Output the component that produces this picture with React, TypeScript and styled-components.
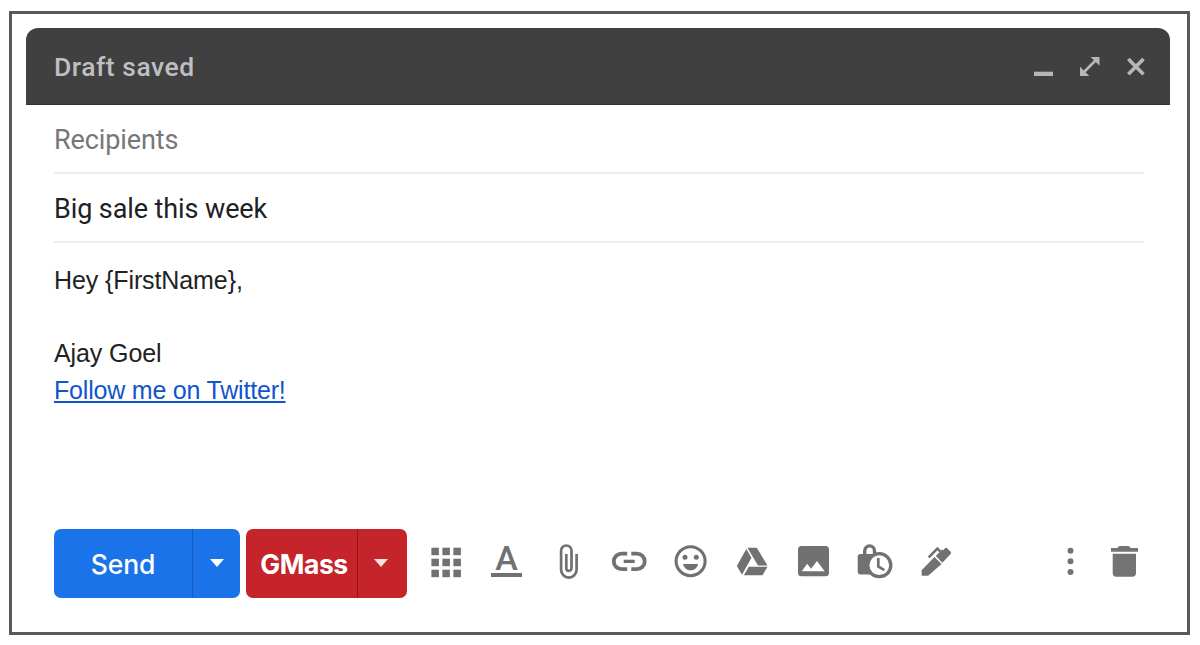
import type { ReactNode } from "react";
import styled, { createGlobalStyle } from "styled-components";

const Icon = (props: { label: string; children: ReactNode }) => (
  <S.Icon viewBox="0 0 40 40" role="img" aria-label={props.label}>
    {props.children}
  </S.Icon>
);

const SplitButton = (props: {
  label: string;
  color: string;
  divider: string;
  mainWidth: number;
  menuWidth: number;
  bold?: boolean;
}) => (
  <S.SplitButton $color={props.color}>
    <S.MainAction $width={props.mainWidth} $bold={props.bold}>
      {props.label}
    </S.MainAction>
    <S.MenuAction
      $width={props.menuWidth}
      $divider={props.divider}
      $bold={props.bold}
      aria-label={`${props.label} options`}
    >
      <S.Caret $soft={props.bold} />
    </S.MenuAction>
  </S.SplitButton>
);

const WindowControls = () => (
  <S.Controls>
    <Icon label="Minimize">
      <path d="M10 24.7h19v4.3H10z" />
    </Icon>
    <Icon label="Full screen">
      <path d="M20.7 10h8.8v8.8zM10 19.8v9.2h9.3z" />
      <path d="M13.5 25.5l12.5-12.5" stroke="currentColor" strokeWidth="2.7" />
    </Icon>
    <Icon label="Close">
      <path
        d="M12.3 12.1l15.2 15.2M27.5 12.1L12.3 27.3"
        stroke="currentColor"
        strokeWidth="3.6"
      />
    </Icon>
  </S.Controls>
);

const FormatIcons = () => (
  <S.Tools>
    <Icon label="Apps">
      {[6.7, 17.7, 28.7].map((y) =>
        [5.4, 16.4, 27.4].map((x) => (
          <rect key={`${x}-${y}`} x={x} y={y} width="7.5" height="7.5" />
        ))
      )}
    </Icon>
    <S.TextTool>A</S.TextTool>
    <Icon label="Attach files">
      <path
        d="M28.6 13v15.8a7.7 7.7 0 0 1-15.5 0V9.7a5.2 5.2 0 0 1 10.4 0v17.6a2.6 2.6 0 0 1-5.2 0V13"
        fill="none"
        stroke="currentColor"
        strokeWidth="2.7"
      />
    </Icon>
    <Icon label="Insert link">
      <path
        d="M18.2 12.6h-5.6a7.8 7.8 0 0 0 0 15.6h5.6M22.3 12.6h5.6a7.8 7.8 0 0 1 0 15.6h-5.6"
        fill="none"
        stroke="currentColor"
        strokeWidth="3.8"
      />
      <path d="M14.7 18.7h11V22h-11z" />
    </Icon>
    <Icon label="Insert emoji">
      <circle
        cx="20.6"
        cy="20.2"
        r="14.5"
        fill="none"
        stroke="currentColor"
        strokeWidth="3.1"
      />
      <circle cx="15" cy="16.2" r="2.5" />
      <circle cx="26.3" cy="16.2" r="2.5" />
      <path d="M13 22.9h15.2c-1 4.1-4.100 6.400-7.600 6.400s-6.600-2.300-7.600-6.400z" />
    </Icon>
    <Icon label="Insert from Drive">
      <path d="M15.3 7.9l5.2 8.9L11 33.7 5.8 25z" />
      <path d="M16.4 6.8h9.4l10.7 17.7H27z" />
      <path d="M17.8 25.7h18.7l-5 8.6H12.8z" />
    </Icon>
    <Icon label="Insert photo">
      <path
        fillRule="evenodd"
        d="M9.5 5h24a3.5 3.5 0 0 1 3.5 3.5v23.3a3.5 3.5 0 0 1-3.5 3.5h-24A3.5 3.5 0 0 1 6 31.8V8.5A3.5 3.5 0 0 1 9.5 5zM9.7 30.2h23L25 20.1l-6 7.6-3.8-5z"
      />
    </Icon>
    <Icon label="Confidential mode">
      <path
        d="M11.7 14V9.8a4.9 4.9 0 0 1 9.8 0V14"
        fill="none"
        stroke="currentColor"
        strokeWidth="3.4"
      />
      <rect x="4.7" y="13" width="22" height="20.5" rx="3" />
      <circle
        cx="26.3"
        cy="24.2"
        r="11.5"
        fill="#fff"
        stroke="currentColor"
        strokeWidth="3.3"
      />
      <path
        d="M25.3 17v8.5l6 3.6"
        fill="none"
        stroke="currentColor"
        strokeWidth="2.7"
      />
    </Icon>
    <Icon label="Insert signature">
      <path d="M7.700 34.700v-5.500L20.400 16l7.200 7.100-13.500 11.600z" />
      <path d="M21.800 14.900l6.400-6.400 1.200.800 1.600-2q1.200-1 2.400.200l3.200 3.200q1.100 1.200 0 2.400l-8.200 8.600z" />
      <path
        d="M14.700 16.300l8.700-8.700 3 3"
        fill="none"
        stroke="currentColor"
        strokeWidth="2.6"
      />
    </Icon>
  </S.Tools>
);

const App = () => (
  <>
    <GlobalStyle />
    <S.Frame>
      <S.Header>
        <span>Draft saved</span>
        <WindowControls />
      </S.Header>
      <S.Content>
        <S.Recipients>Recipients</S.Recipients>
        <S.Subject>Big sale this week</S.Subject>
        <S.Message>
          <p>Hey {"{FirstName}"},</p>
          <br />
          <p>Ajay Goel</p>
          <a href="#twitter">Follow me on Twitter!</a>
        </S.Message>
        <S.Toolbar>
          <SplitButton
            label="Send"
            color="#1a73e8"
            divider="#185abc"
            mainWidth={138}
            menuWidth={48}
          />
          <SplitButton
            label="GMass"
            color="#c5242b"
            divider="#92151c"
            mainWidth={111}
            menuWidth={50}
            bold
          />
          <FormatIcons />
          <S.EndTools>
            <Icon label="More options">
              <circle cx="20.5" cy="9.7" r="3" />
              <circle cx="20.5" cy="20.3" r="3" />
              <circle cx="20.5" cy="31" r="3" />
            </Icon>
            <Icon label="Discard draft">
              <path d="M7 7h6.3l2-2h9.4l2 2H34v3.7H7z" />
              <path d="M8.7 12.7H32V32a3.7 3.7 0 0 1-3.7 3.7H12.4A3.7 3.7 0 0 1 8.7 32z" />
            </Icon>
          </S.EndTools>
        </S.Toolbar>
      </S.Content>
    </S.Frame>
  </>
);

export default App;

const GlobalStyle = createGlobalStyle`
  * {
    box-sizing: border-box;
  }

  body {
    margin: 0;
    background-color: #fff;
  }

  p {
    margin: 0;
  }
`;

const Field = styled.div`
  height: 69px;
  padding-top: 2px;
  display: flex;
  align-items: center;
  border-bottom: 2px solid #eceeee;
  font-family: Roboto, sans-serif;
  font-size: 27px;
  letter-spacing: -0.1px;
`;

const S = {
  Frame: styled.main`
    width: 1181px;
    height: 624px;
    margin: 11px 0 0 9px;
    padding: 14px 17px 0 14px;
    border: 3px solid #58595a;
    display: flex;
    flex-direction: column;
  `,

  Header: styled.header`
    height: 77px;
    padding: 1px 14px 0 28px;
    display: flex;
    align-items: center;
    justify-content: space-between;
    background-color: #404040;
    border-bottom: 1px solid #333;
    border-radius: 12px 12px 0 0;
    color: #bdbfc2;
    font-family: Roboto, sans-serif;
    font-size: 26.5px;
    font-weight: 500;
    letter-spacing: 0.5px;
  `,

  Controls: styled.div`
    display: flex;
    gap: 6px;
    color: #b7b7b7;
  `,

  Icon: styled.svg`
    display: block;
    flex: none;
    width: 40px;
    height: 40px;
    fill: currentColor;
  `,

  Content: styled.section`
    padding: 0 26px 0 28px;
    display: flex;
    flex-direction: column;
  `,

  Recipients: styled(Field)`
    color: #777;
  `,

  Subject: styled(Field)`
    color: #202124;
  `,

  Message: styled.div`
    height: 286px;
    padding-top: 19px;
    color: #222;
    font-family: "Liberation Sans", Arial, sans-serif;
    font-size: 25px;
    line-height: 36.5px;
    letter-spacing: -0.1px;

    a {
      color: #1155cc;
      letter-spacing: -0.2px;
      text-decoration-thickness: 2px;
      text-underline-offset: 2px;
    }
  `,

  Toolbar: styled.div`
    height: 69px;
    display: flex;
    align-items: center;
    gap: 6px;
  `,

  SplitButton: styled.div<{ $color: string }>`
    height: 69px;
    display: flex;
    overflow: hidden;
    border-radius: 7px;
    background-color: ${({ $color }) => $color};

    button {
      border: 0;
      background: none;
      color: #fff;
      cursor: pointer;
    }
  `,

  MainAction: styled.button<{ $width: number; $bold?: boolean }>`
    width: ${({ $width }) => $width}px;
    padding: 0 0 0 ${({ $bold }) => ($bold ? 5 : 0)}px;
    font-family: Inter, sans-serif;
    font-size: 26.5px;
    font-weight: ${({ $bold }) => ($bold ? 700 : 500)};
    letter-spacing: ${({ $bold }) => ($bold ? -0.4 : -0.1)}px;
  `,

  MenuAction: styled.button<{
    $width: number;
    $divider: string;
    $bold?: boolean;
  }>`
    width: ${({ $width }) => $width}px;
    display: flex;
    align-items: center;
    justify-content: center;
    && {
      padding: 0 ${({ $bold }) => ($bold ? 3 : 0)}px 2px 0;
      border-left: 1px solid ${({ $divider }) => $divider};
    }
  `,

  Caret: styled.span<{ $soft?: boolean }>`
    border: 7.5px solid transparent;
    border-top: 8px solid ${({ $soft }) => ($soft ? "#f8dfe0" : "#fff")};
    border-bottom: 0;
  `,

  Tools: styled.div`
    margin: 0 0 5px 13px;
    display: flex;
    gap: 21px;
    color: #717171;
  `,

  TextTool: styled.span`
    width: 31px;
    height: 36px;
    margin: 0 5px 0 4px;
    border-bottom: 4px solid currentColor;
    font-family: Roboto, sans-serif;
    font-size: 34px;
    font-weight: 500;
    line-height: 35px;
    text-align: center;
  `,

  EndTools: styled.div`
    margin: 0 0 5px auto;
    display: flex;
    gap: 14px;
    color: #737373;
  `,
};
